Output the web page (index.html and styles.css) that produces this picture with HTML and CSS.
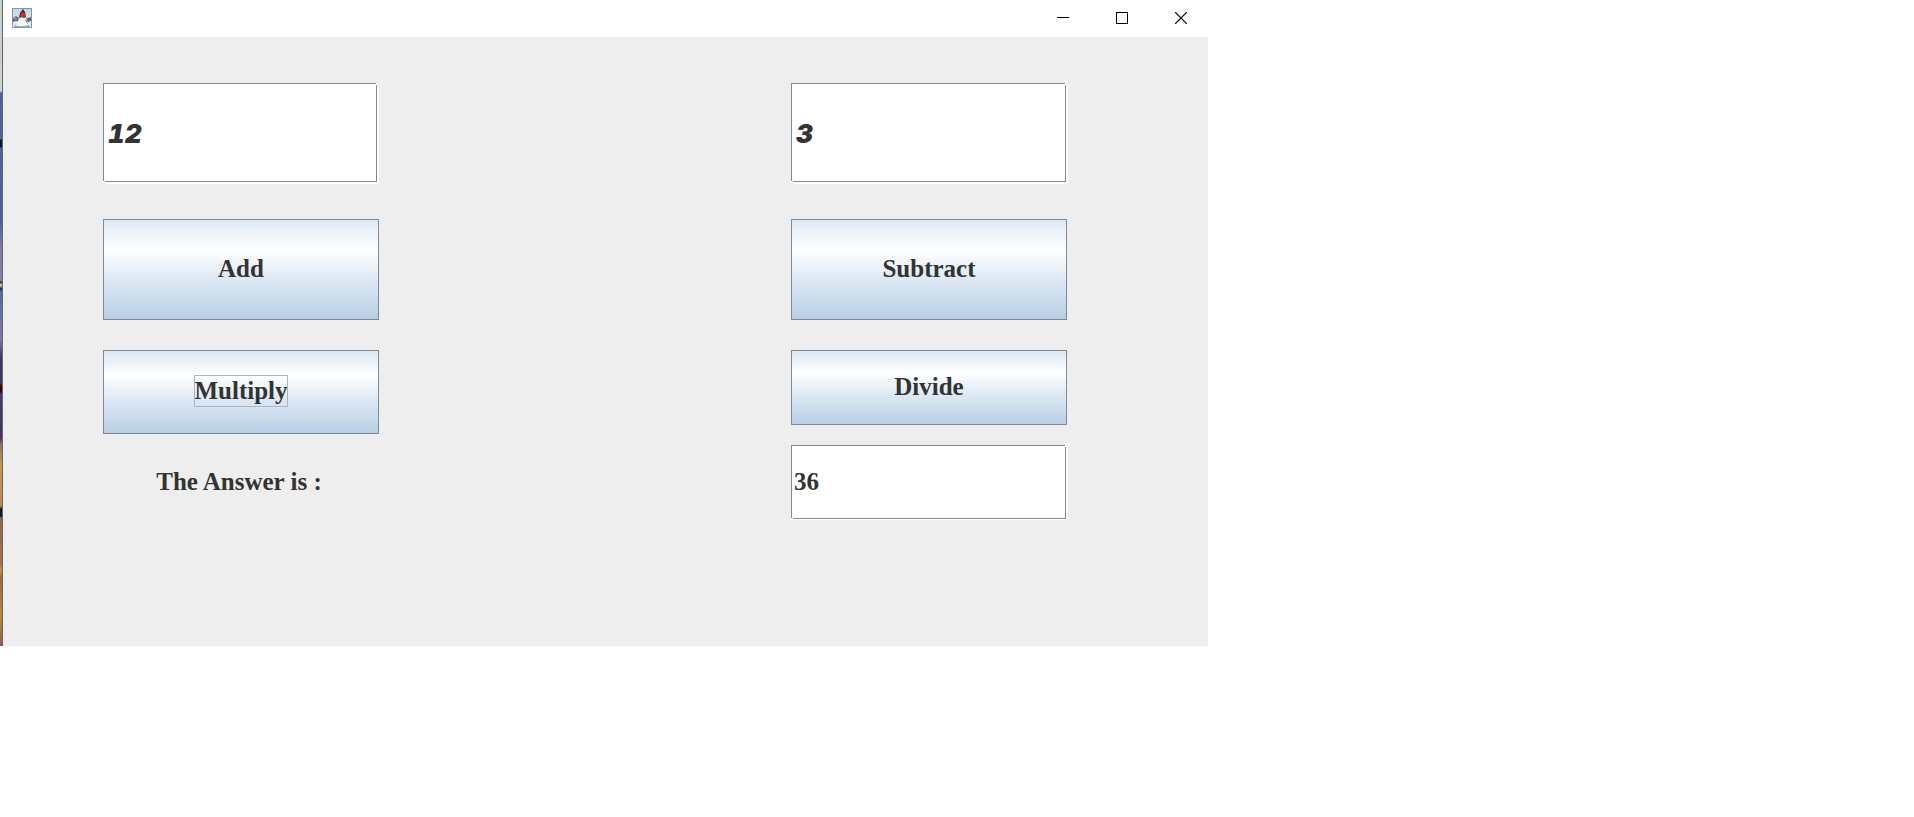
FILE: index.html
```
<!DOCTYPE html>
<html lang="en">
<head>
<meta charset="utf-8">
<title>Calculator</title>
<link rel="stylesheet" href="styles.css">
</head>
<body>
<div class="screen">
  <div class="app">
    <div class="desktop-edge"></div>
    <main class="window">
      <header class="titlebar">
        <svg class="app-icon" width="20" height="20" viewBox="0 0 20 20" aria-hidden="true">
          <defs>
            <linearGradient id="sky" x1="0" y1="0" x2="0" y2="1">
              <stop offset="0" stop-color="#c3d3e0"/>
              <stop offset="1" stop-color="#f2f5f8"/>
            </linearGradient>
          </defs>
          <rect x=".5" y=".5" width="19" height="19" fill="url(#sky)" stroke="#8199ad"/>
          <path d="M1 10l3-2 3 2v4l-3-1-3 1zM13 9l3 1 3-1v4l-3 1-3-2z" fill="#5d6972"/>
          <path d="M3 9l2 1-1 2-2-1z" fill="#7ca6cc"/>
          <path d="M3 16h14l1 3H2z" fill="#a6abaf"/>
          <path d="M8 8h6l1 4 2 5-5 1H6l-3-1 3-4z" fill="#f6f6f6"/>
          <path d="M11 1l2 3 1 5-2 1-2-1-3 1 1-5z" fill="#2d2f34"/>
          <path d="M13 11l2 1 1 4-2-2z" fill="#8d9297"/>
          <circle cx="11" cy="7" r="2.500" fill="#e52628"/>
        </svg>
        <div class="controls">
          <button class="control" aria-label="Minimize"><svg width="12" height="12" viewBox="0 0 12 12"><path d="M0 5.500h12" stroke="#000"/></svg></button>
          <button class="control" aria-label="Maximize"><svg width="12" height="12" viewBox="0 0 12 12"><rect x=".5" y=".5" width="11" height="11" fill="none" stroke="#000"/></svg></button>
          <button class="control" aria-label="Close"><svg width="12" height="12" viewBox="0 0 12 12"><path d="M0 0l12 12M12 0L0 12" stroke="#000" stroke-width="1.200"/></svg></button>
        </div>
      </header>
      <form class="panel">
        <div class="column column-left">
          <input class="field operand" type="text" value="12" aria-label="First number">
          <button class="action tall" type="button">Add</button>
          <button class="action medium" type="button"><span class="focused">Multiply</span></button>
          <label class="caption" for="answer">The Answer is :</label>
        </div>
        <div class="column column-right">
          <input class="field operand" type="text" value="3" aria-label="Second number">
          <button class="action tall" type="button">Subtract</button>
          <button class="action short" type="button">Divide</button>
          <input class="field answer" id="answer" type="text" value="36">
        </div>
      </form>
    </main>
  </div>
</div>
</body>
</html>
```
FILE: styles.css
```
* {
  box-sizing: border-box;
}

body {
  margin: 0;
  background: #fff;
  color: #333;
  font: bold 25px/29px "Times New Roman", "Liberation Serif", serif;
}

.screen {
  display: grid;
  grid-template-columns: 1208fr 706fr;
}

.app {
  display: flex;
}

.desktop-edge {
  flex: none;
  width: 3px;
  border-right: 1px solid #62666c;
  background: linear-gradient(
    #c3cfcc 0, #cbd5d2 91px,
    #4d6197 93px, #52649b 139px,
    #1c1320 140px, #1c1320 147px,
    #4c639c 148px, #4a619a 220px,
    #827da5 250px, #8580a5 281px,
    #1d1015 282px, #f2d5c0 285px, #30151a 289px,
    #5367a0 291px, #7c79a0 340px,
    #3d3863 357px, #3b365f 384px,
    #35050c 385px, #35050c 392px,
    #453b68 394px, #44365b 438px,
    #94716c 445px, #c7974c 465px, #bd8d50 506px,
    #151820 509px, #151820 516px,
    #94644e 518px, #a37249 565px,
    #c59a25 570px, #98684b 578px,
    #b9892f 616px, #8b604f 646px);
}

.window {
  flex: 1;
  min-width: 0;
}

.titlebar {
  display: flex;
  justify-content: space-between;
  align-items: flex-start;
  height: 37px;
  padding-left: 9px;
  background: #fff;
}

.app-icon {
  margin-top: 8px;
}

.controls {
  display: flex;
  gap: 5px;
}

.control {
  display: flex;
  justify-content: center;
  align-items: center;
  width: 54px;
  height: 36px;
  padding: 0;
  border: 0;
  background: none;
}

.panel {
  display: grid;
  grid-template-columns: 100fr 276fr 412fr 276fr 141fr;
  padding: 46px 0 127px;
  background: #eee;
}

.column {
  display: flex;
  flex-direction: column;
}

.column-left {
  grid-column: 2;
}

.column-right {
  grid-column: 4;
}

.field {
  --line: linear-gradient(#7a8a99, #7a8a99);
  width: calc(100% - 2px);
  border: 0;
  border-radius: 0;
  outline: 0;
  color: #333;
  font: inherit;
  background:
    var(--line) 0 0 / calc(100% - 1px) 1px no-repeat,
    var(--line) 0 0 / 1px calc(100% - 1px) no-repeat,
    var(--line) 100% 100% / calc(100% - 2px) 1px no-repeat,
    var(--line) 100% 100% / 1px calc(100% - 2px) no-repeat,
    #fff;
}

.operand {
  height: 99px;
  margin-bottom: 37px;
  padding: 2px 5px 0;
  box-shadow: 2px 2px 0 #fff;
  font: italic 900 26px/29px "Arial Black", Inter, sans-serif;
  font-variant-numeric: tabular-nums;
}

.answer {
  height: 74px;
  margin-top: 20px;
  padding: 0 3px;
  box-shadow: 2px 1px 0 #fff;
}

.column-right .field {
  width: calc(100% - 1px);
}

.action {
  display: flex;
  justify-content: center;
  align-items: center;
  padding: 0 0 2px;
  border: 1px solid #7a8a99;
  border-radius: 0;
  color: #333;
  font: inherit;
  background: linear-gradient(#dde8f3 0, #fff 30%, #dde8f3 60%, #b8cfe5 100%);
}

.tall {
  height: 101px;
  margin-bottom: 30px;
}

.medium {
  height: 84px;
}

.short {
  height: 75px;
}

.focused {
  height: 32px;
  padding-top: 1px;
  outline: 1px solid #a3b8cc;
  outline-offset: -1px;
}

.caption {
  margin-top: 33px;
  padding-right: 4px;
  text-align: center;
}
```
